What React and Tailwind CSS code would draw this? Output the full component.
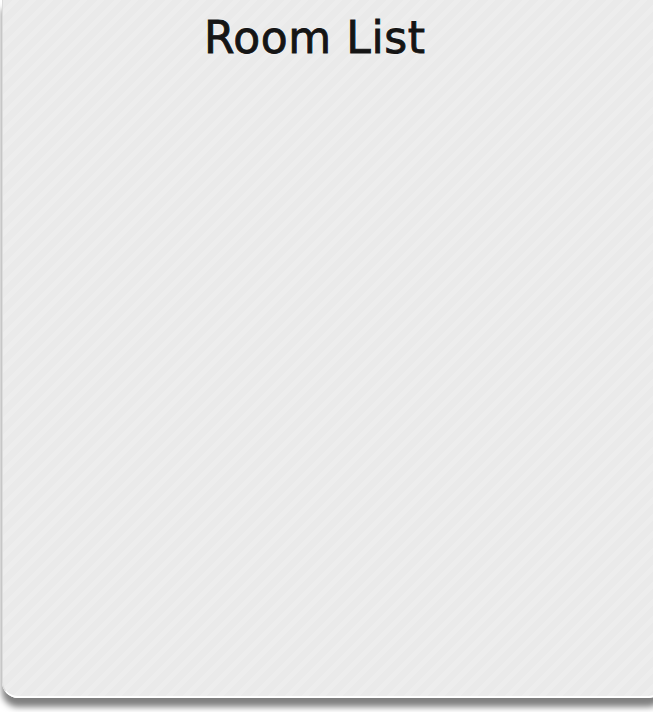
const stripes =
  "bg-[repeating-linear-gradient(135deg,#eaeaea_0px,#eaeaea_7px,#ededed_7px,#ededed_12px)]";

export default function App() {
  return (
    <div className="h-[712px] w-[653px] overflow-hidden bg-white">
      <div
        className={`ml-[2px] h-[698px] w-[662px] rounded-b-[16px] border-l border-b-2 border-l-[#dcdcdc] border-b-white ${stripes} shadow-[0_9px_6px_rgba(0,0,0,0.5)]`}
      >
        <h1 className="pt-[12px] pl-[201px] text-[44px] leading-[52px] tracking-[0.6px] text-[#151515] font-['DejaVu_Sans',sans-serif] [-webkit-text-stroke:0.9px_#151515] [text-shadow:0_0_2px_#fff,0_0_2px_#fff]">
          Room List
        </h1>
      </div>
    </div>
  );
}
